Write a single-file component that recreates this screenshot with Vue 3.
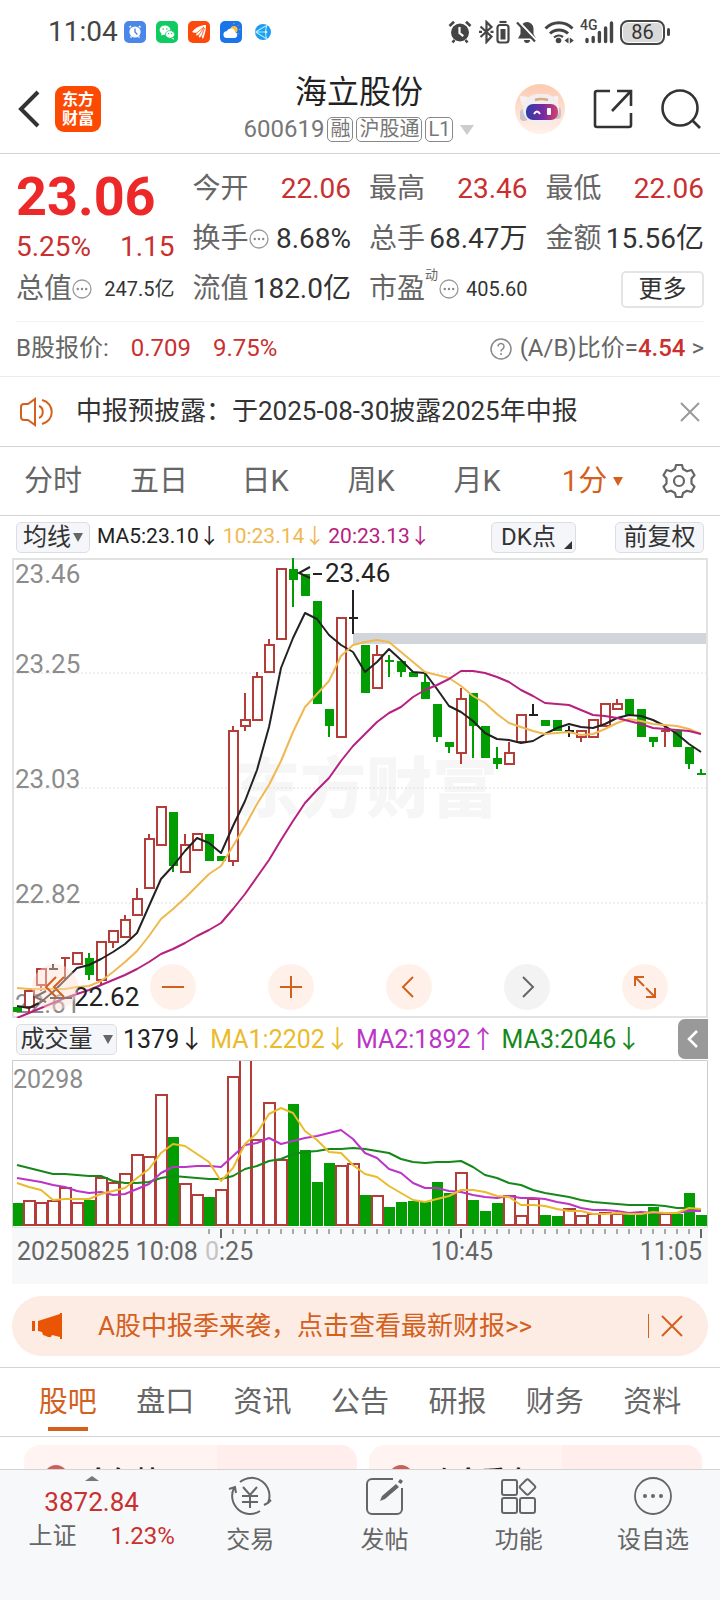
<template>
  <div class="page">
    <div class="status-bar">
      <span class="clock">11:04</span>
      <div class="app-dots">
        <svg viewBox="0 0 22 22" class="app-dot">
          <rect width="22" height="22" rx="5" fill="#4a87e8" />
          <circle cx="11" cy="11" r="5.6" fill="#fff" />
          <path d="M5.5 6.5l1.5-1.5M16.5 6.5L15 5M6.5 16.5l1-1M15.5 16.5l-1-1" stroke="#fff" stroke-width="1.6" />
          <path d="M11 7.5V11l2.4 2.4" stroke="#4a87e8" stroke-width="1.4" fill="none" />
        </svg>
        <svg viewBox="0 0 22 22" class="app-dot">
          <rect width="22" height="22" rx="5" fill="#0fcb62" />
          <ellipse cx="9" cy="9" rx="5.4" ry="4.5" fill="#fff" />
          <path d="M5 14.5l1-3 3 2z" fill="#fff" />
          <ellipse cx="14" cy="13.4" rx="4.6" ry="3.8" fill="#fff" stroke="#0fcb62" stroke-width=".7" />
          <path d="M15 17.5l2.6-.6.4 1.6z" fill="#fff" />
          <g fill="#0fcb62">
            <circle cx="7.2" cy="8" r=".8" /><circle cx="10.8" cy="8" r=".8" />
            <circle cx="12.6" cy="12.6" r=".7" /><circle cx="15.6" cy="12.6" r=".7" />
          </g>
        </svg>
        <svg viewBox="0 0 22 22" class="app-dot">
          <rect width="22" height="22" rx="5" fill="#fb4a0b" />
          <path d="M4 11C8 6 13 4 18 4c0 5-1 9-3 14-.8-1-1.4-2-1.6-3.200-.8 1-1.400 1.500-2.400 2-.3-1.200-.2-2 .1-3.200-1 .6-2 .9-3.100.9 0-1 .4-1.800 1-2.700-1.600.2-3.200 0-5-.8z" fill="#fff" />
          <path d="M8.500 12.200L16 6M11 14l5-7.500M13.500 15.500l3-8.500" stroke="#fb4a0b" stroke-width=".8" />
        </svg>
        <svg viewBox="0 0 22 22" class="app-dot">
          <rect width="22" height="22" rx="5" fill="#1a74ea" />
          <circle cx="14" cy="8.500" r="3.600" fill="#fbc04a" />
          <path d="M14 3.200v-1M18 4.700l.8-.8M19.300 8.500h1M18 12.300l.8.8" stroke="#fbc04a" />
          <path d="M7 17a3.400 3.400 0 0 1-.3-6.800 4.500 4.500 0 0 1 8.500 1A3 3 0 0 1 15 17z" fill="#fff" />
        </svg>
        <svg viewBox="0 0 22 22" class="app-dot">
          <circle cx="11" cy="11" r="8" fill="#1f9cf0" />
          <path d="M3.500 11L15 4.200M3.500 11l11.500 7M15 4.200c-2 5-2 9.500 0 13.800M3.500 11h10" stroke="#a9ecff" stroke-width="1.100" fill="none" />
          <circle cx="14" cy="11" r="1.300" fill="#c8f4ff" />
        </svg>
      </div>
      <div class="status-icons">
        <svg viewBox="0 0 24 24" width="24" height="24">
          <circle cx="12" cy="12.500" r="9" fill="#454545" />
          <path d="M1.500 6L6 1.800M22.500 6L18 1.800M4.500 22.500l2-2.500M19.500 22.500l-2-2.500" stroke="#454545" stroke-width="2.600" />
          <path d="M11.500 7v6l3.800 3.200" stroke="#fff" stroke-width="2.200" fill="none" />
        </svg>
        <svg viewBox="0 0 32 24" width="32" height="24" fill="none" stroke="#454545" stroke-width="2.200">
          <path d="M2.500 6.500l11 10-5 5.500V2l5 5-11 10M1 11.800h3M12.500 11.800h3" />
          <rect x="19.500" y="5" width="11" height="17.500" rx="2.500" />
          <path d="M21.500 2h7" />
          <path d="M22.500 9h5v10.500h-5z" fill="#454545" stroke="none" />
        </svg>
        <svg viewBox="0 0 22 24" width="22" height="24">
          <path d="M11 2a6.500 6.500 0 0 1 6.500 6.500V14l2.500 4.500H2L4.500 14V8.500A6.500 6.500 0 0 1 11 2zM8 20h6a3 3 0 0 1-6 0z" fill="#454545" />
          <path d="M3 2l18 19" stroke="#fff" stroke-width="2.500" />
          <path d="M1 2.500l18 19" stroke="#454545" stroke-width="2.200" />
        </svg>
        <svg viewBox="0 0 30 24" width="30" height="24" fill="none" stroke="#454545" stroke-width="3">
          <path d="M1.500 8.500a19 19 0 0 1 27 0M6 13.500a13 13 0 0 1 18 0" />
          <path d="M10 17.500a7 7 0 0 1 9-.5" stroke-width="2.400" />
          <circle cx="14.500" cy="20.500" r="2.800" fill="#454545" stroke="none" />
          <path d="M24.500 17.500v6l-4-3zM25.800 17.500v6l4-3z" fill="#454545" stroke="none" />
        </svg>
        <div class="signal">
          <span class="net">4G</span>
          <svg viewBox="0 0 34 24" width="34" height="24" stroke="#454545" stroke-width="3.400" stroke-linecap="round">
            <path d="M7 19.500v2M13.200 17.500v4M19.400 12.500v9M25.600 8v13.500M31.500 3v18.500" />
          </svg>
        </div>
        <div class="battery"><span>86</span></div>
        <i class="battery-tip"></i>
      </div>
    </div>

    <header class="header">
      <div class="header-side">
        <button class="icon-btn" aria-label="返回">
          <svg viewBox="0 0 24 40" width="24" height="40"><path d="M21 3L4 20l17 17" fill="none" stroke="#333" stroke-width="4" /></svg>
        </button>
        <a href="#" class="logo"><span>东方</span><span>财富</span></a>
      </div>
      <div class="title-box">
        <h1>海立股份</h1>
        <div class="code-row">
          <span>600619</span>
          <span class="badge">融</span>
          <span class="badge">沪股通</span>
          <span class="badge">L1</span>
          <i class="caret"></i>
        </div>
      </div>
      <div class="header-side right">
        <button class="icon-btn" aria-label="智能助手">
          <svg viewBox="0 0 50 50" width="50" height="50">
            <defs>
              <linearGradient id="halo" x1="0" y1="0" x2="0" y2="1">
                <stop offset="0" stop-color="#fdc9b0" /><stop offset="1" stop-color="#fff2ec" />
              </linearGradient>
              <linearGradient id="visor" x1="0" y1="0" x2="1" y2="0">
                <stop offset="0" stop-color="#2e3ca8" /><stop offset=".55" stop-color="#7a2aa0" /><stop offset="1" stop-color="#d8436a" />
              </linearGradient>
            </defs>
            <circle cx="25" cy="25" r="25" fill="url(#halo)" />
            <path d="M5 12c5 0 8 1 11 3l-8 7c-2-3-3-6-3-10zM43 12c-4 0-7 1-9 3l7 6c2-3 3-5 2-9z" fill="#f6f1f1" />
            <rect x="5" y="25" width="8" height="12" rx="4" fill="#c8c4cc" />
            <rect x="38" y="23" width="8" height="12" rx="4" fill="#c8c4cc" />
            <rect x="8" y="10" width="36" height="30" rx="15" fill="#f1eef1" />
            <path d="M20 16q6-2 13 0" stroke="#dba77c" stroke-width="2.500" fill="none" />
            <rect x="11" y="20" width="32" height="16" rx="7" fill="url(#visor)" />
            <path d="M19 30q3-5 6 0" stroke="#fff" stroke-width="2" fill="none" />
            <rect x="32" y="24" width="4" height="7" rx="1" fill="#fff" />
          </svg>
        </button>
        <button class="icon-btn" aria-label="分享">
          <svg viewBox="0 0 40 40" width="40" height="40" fill="none" stroke="#333" stroke-width="2.600">
            <path d="M17 2H4a2 2 0 0 0-2 2v32a2 2 0 0 0 2 2h32a2 2 0 0 0 2-2V24M24 2h14v15M37 3L19 22" />
          </svg>
        </button>
        <button class="icon-btn" aria-label="搜索">
          <svg viewBox="0 0 40 40" width="40" height="40" fill="none" stroke="#333" stroke-width="2.600">
            <circle cx="19" cy="19" r="17.500" /><path d="M31 31l8 8" />
          </svg>
        </button>
      </div>
    </header>

    <main class="content">
      <section class="quote">
        <div class="price-box">
          <div class="price">23.06</div>
          <div class="change"><span>5.25%</span><span>1.15</span></div>
        </div>
        <div v-for="s in stats" :key="s.label" class="stat">
          <span class="label">{{ s.label }}<sup v-if="s.sup">{{ s.sup }}</sup></span>
          <svg v-if="s.info" class="info" viewBox="0 0 20 20">
            <circle cx="10" cy="10" r="9" fill="none" stroke="#999" stroke-width="1.300" />
            <g fill="#888"><circle cx="5.800" cy="10" r="1.200" /><circle cx="10" cy="10" r="1.200" /><circle cx="14.200" cy="10" r="1.200" /></g>
          </svg>
          <span class="value" :class="{ up: s.up, small: s.small }">{{ s.value }}</span>
        </div>
        <div class="stat"><button class="more">更多</button></div>
      </section>

      <div class="b-share">
        <span class="b-label">B股报价:</span>
        <span class="up">0.709</span>
        <span class="up">9.75%</span>
        <a href="#" class="ratio">
          <svg viewBox="0 0 22 22" width="22" height="22">
            <circle cx="11" cy="11" r="10" fill="none" stroke="#888" stroke-width="1.500" />
            <path d="M8 8.500a3 3 0 1 1 4.500 2.600c-1 .6-1.500 1-1.500 2.400M11 15v2" fill="none" stroke="#888" stroke-width="1.500" />
          </svg>
          <span>(A/B)比价=<b>4.54</b> &gt;</span>
        </a>
      </div>

      <div class="notice">
        <svg viewBox="0 0 34 30" width="34" height="30" fill="none" stroke="#d4601e" stroke-width="2">
          <path d="M15 2v26l-7-5H4a3 3 0 0 1-3-3V10a3 3 0 0 1 3-3h4zM19 9c5 2 5 10 0 12M22 3c13 3 13 21 0 24" />
        </svg>
        <span class="notice-text">中报预披露：于2025-08-30披露2025年中报</span>
        <button class="icon-btn" aria-label="关闭">
          <svg viewBox="0 0 20 20" width="20" height="20"><path d="M1 1l18 18M19 1L1 19" stroke="#999" stroke-width="2" /></svg>
        </button>
      </div>

      <nav class="periods">
        <button v-for="p in periods" :key="p">{{ p }}</button>
        <button class="active">1分<i class="tri"></i></button>
        <button class="gear" aria-label="设置">
          <svg viewBox="0 0 36 36" width="36" height="36" fill="none" stroke="#666" stroke-width="2.200" stroke-linejoin="round">
            <path d="M15 2h6l1 4 4 2.300 4.500-1.300 3 5.200L30.500 15.500v5l3 3.300-3 5.200L26 27.700 22 30l-1 4h-6l-1-4-4-2.300L5.500 29l-3-5.200 3-3.300v-5l-3-3.300 3-5.200L10 8.300 14 6z" />
            <circle cx="18" cy="18" r="5" />
          </svg>
        </button>
      </nav>

      <section class="charts">
        <div class="bar">
          <button class="pill">均线<i class="tri grey"></i></button>
          <span class="ma-item c-black">MA5:23.10<em>↓</em></span>
          <span class="ma-item c-gold">10:23.14<em>↓</em></span>
          <span class="ma-item c-pink">20:23.13<em>↓</em></span>
          <button class="pill dk">DK点<i class="corner"></i></button>
          <button class="pill adjust">前复权</button>
        </div>

        <div class="price-chart">
          <svg viewBox="0 0 696 460" class="canvas">
            <text x="354" y="254" class="watermark">东方财富</text>
            <path v-for="y in [115, 230, 345]" :key="y" :d="`M1 ${y}H695`" class="grid" />
            <rect x="341" y="75" width="354" height="11" fill="#d2d6da" />
            <rect x="1" y="1" width="694" height="458" class="frame" />
            <text v-for="t in axis" :key="t.text" x="3" :y="t.y" class="axis">{{ t.text }}</text>
            <g v-for="c in candles" :key="c.x" :class="c.kind">
              <path :d="c.wick" class="wick" />
              <rect v-if="c.kind === 'rise' && c.h > 0" :x="c.x - 4" :y="c.y" width="9" :height="c.h" class="hollow" />
              <rect v-else-if="c.h > 0" :x="c.x - 4" :y="c.y" width="9" :height="c.h" class="solid" />
              <path v-else :d="`M${c.x - 4} ${c.y}h9`" class="wick" />
            </g>
            <polyline :points="priceMa(5)" class="line" stroke="#222" />
            <polyline :points="priceMa(10)" class="line" stroke="#efb850" />
            <polyline :points="priceMa(20)" class="line" stroke="#b8207f" />
            <path d="M298 9l-11 6 11 5M301 16h9" class="pointer" />
            <text x="313" y="24" class="mark">23.46</text>
            <path d="M34 433l-11 6 11 5M38 440h22" class="pointer" />
            <text x="62" y="448" class="mark">22.62</text>
          </svg>
          <div class="tools">
            <button aria-label="快退"><svg viewBox="0 0 24 24"><path d="M13 2L3 12l10 10M21 2L11 12l10 10" /></svg></button>
            <button aria-label="缩小"><svg viewBox="0 0 24 24"><path d="M1 12h22" /></svg></button>
            <button aria-label="放大"><svg viewBox="0 0 24 24"><path d="M1 12h22M12 1v22" /></svg></button>
            <button aria-label="左移"><svg viewBox="0 0 24 24"><path d="M16 2L6 12l10 10" /></svg></button>
            <button aria-label="右移" class="off"><svg viewBox="0 0 24 24"><path d="M8 2l10 10L8 22" /></svg></button>
            <button aria-label="全屏"><svg viewBox="0 0 24 24"><path d="M2 11V2h9M2.500 2.500L11 11M22 13v9h-9M21.500 21.500L13 13" /></svg></button>
          </div>
        </div>

        <div class="bar vol-bar">
          <button class="pill vol-pill">成交量<i class="tri grey"></i></button>
          <span class="vol-item c-black">1379<em>↓</em></span>
          <span class="vol-item c-yellow">MA1:2202<em>↓</em></span>
          <span class="vol-item c-purple">MA2:1892<em>↑</em></span>
          <span class="vol-item c-green">MA3:2046<em>↓</em></span>
          <button class="fold" aria-label="收起">
            <svg viewBox="0 0 12 18" width="12" height="18"><path d="M10 1L2 9l8 8" fill="none" stroke="#fff" stroke-width="2.600" /></svg>
          </button>
        </div>

        <svg viewBox="0 0 696 167" class="canvas">
          <g v-for="v in volumeBars" :key="v.x" :class="v.kind">
            <rect v-if="v.kind === 'rise'" :x="v.x - 5" :y="v.y" width="11" :height="165 - v.y" class="hollow" />
            <rect v-else :x="v.x - 5" :y="v.y" width="11" :height="166 - v.y" class="solid" />
          </g>
          <polyline :points="volumeMa(20)" class="line" stroke="#16881a" />
          <polyline :points="volumeMa(10)" class="line" stroke="#bb35c6" />
          <polyline :points="volumeMa(5)" class="line" stroke="#eabb2c" />
          <path d="M.5 167V.5H695.500V167" class="frame-thin" />
          <text x="1" y="28" class="axis-small">20298</text>
        </svg>

        <svg viewBox="0 0 696 57" class="canvas time-axis">
          <path d="M0 0H696" stroke="#c4d6c4" />
          <path v-for="t in ticks" :key="t.x" :d="`M${t.x} 2v${t.major ? 9 : 5}`" :stroke="t.major ? '#666' : '#aaa'" stroke-width="2" />
          <text x="5" y="33" class="time">20250825 10:08</text>
          <text x="193" y="33" class="time"><tspan fill="#c4c4c4">0</tspan>:25</text>
          <text x="450" y="33" class="time" text-anchor="middle">10:45</text>
          <text x="690" y="33" class="time" text-anchor="end">11:05</text>
        </svg>
      </section>

      <div class="banner">
        <svg viewBox="0 0 32 28" width="32" height="28" fill="#ea5504">
          <path d="M1 9h3v10H1zM7 9l22-7V1h2v26h-2v-2l-8-2-1 2h-3l-2-1-3-1-1-3-4-1z" />
        </svg>
        <a href="#" class="banner-text">A股中报季来袭，点击查看最新财报&gt;&gt;</a>
        <i class="split"></i>
        <button class="icon-btn" aria-label="关闭">
          <svg viewBox="0 0 22 22" width="22" height="22"><path d="M1 1l20 20M21 1L1 21" stroke="#d4601e" stroke-width="2" /></svg>
        </button>
      </div>

      <nav class="tabs">
        <button v-for="(t, i) in tabs" :key="t" :class="{ active: i === 0 }">{{ t }}</button>
      </nav>

      <div class="cards">
        <div v-for="c in cards" :key="c" class="card"><i></i><b>{{ c }}</b></div>
      </div>
    </main>

    <footer class="footer">
      <div class="index">
        <i class="up-tri"></i>
        <div class="index-value">3872.84</div>
        <div class="index-row"><span>上证</span><span class="up">1.23%</span></div>
      </div>
      <button class="foot-item">
        <svg viewBox="0 0 44 40" width="44" height="40" fill="none" stroke="#666" stroke-width="2">
          <path d="M12 6a18 18 0 0 1 28 21M32 35A18 18 0 0 1 6 12M1 13l6-2 1 6M36 29l4-2 3-3" />
          <path d="M15 11l7 8 7-8M22 19v13M14 20h16M14 26h16" />
        </svg>
        <span>交易</span>
      </button>
      <button class="foot-item">
        <svg viewBox="0 0 44 40" width="44" height="40" fill="none" stroke="#666" stroke-width="2">
          <path d="M30 3H9a5 5 0 0 0-5 5v25a5 5 0 0 0 5 5h25a5 5 0 0 0 5-5V12" />
          <path d="M17 25l2-5L33 8l3 3-14 12zM35 6l2-3 3 2-2 3z" fill="#666" stroke="none" />
        </svg>
        <span>发帖</span>
      </button>
      <button class="foot-item">
        <svg viewBox="0 0 44 40" width="44" height="40" fill="none" stroke="#666" stroke-width="2">
          <rect x="5" y="4" width="15" height="15" rx="2" />
          <rect x="5" y="22" width="15" height="15" rx="2" />
          <rect x="23" y="22" width="15" height="15" rx="2" />
          <rect x="24.500" y="5" width="12" height="12" rx="2" transform="rotate(45 30.500 11)" />
        </svg>
        <span>功能</span>
      </button>
      <button class="foot-item">
        <svg viewBox="0 0 44 40" width="44" height="40" fill="none" stroke="#666" stroke-width="1.800">
          <circle cx="22" cy="20" r="18" />
          <g fill="#666" stroke="none"><circle cx="14" cy="20" r="2" /><circle cx="22" cy="20" r="2" /><circle cx="30" cy="20" r="2" /></g>
        </svg>
        <span>设自选</span>
      </button>
    </footer>
  </div>
</template>

<script setup>
const stats = [
  { label: '今开', value: '22.06', up: true },
  { label: '最高', value: '23.46', up: true },
  { label: '最低', value: '22.06', up: true },
  { label: '换手', value: '8.68%', info: true },
  { label: '总手', value: '68.47万' },
  { label: '金额', value: '15.56亿' },
  { label: '总值', value: '247.5亿', info: true, small: true },
  { label: '流值', value: '182.0亿' },
  { label: '市盈', value: '405.60', sup: '动', info: true, small: true }
]
const periods = ['分时', '五日', '日K', '周K', '月K']
const tabs = ['股吧', '盘口', '资讯', '公告', '研报', '财务', '资料']
const cards = ['人气榜', '个人看点']
const axis = [
  { text: '23.46', y: 25 },
  { text: '23.25', y: 115 },
  { text: '23.03', y: 230 },
  { text: '22.82', y: 345 },
  { text: '22.61', y: 455 }
]

// open, close, high, low (in cents), kind only for a bar that closes flat
const bars = [
  [2263, 2262, 2263, 2262], [2263, 2266, 2266, 2262], [2267, 2270, 2270, 2266], [2270, 2270, 2271, 2270],
  [2272, 2272, 2272, 2268, 'rise'], [2271, 2273, 2273, 2271], [2272, 2269, 2273, 2268], [2268, 2275, 2275, 2267],
  [2275, 2277, 2277, 2274], [2276, 2279, 2280, 2276], [2280, 2283, 2285, 2280], [2285, 2294, 2295, 2285],
  [2293, 2300, 2300, 2293], [2299, 2289, 2299, 2288], [2288, 2293, 2295, 2288], [2292, 2295, 2295, 2292],
  [2295, 2290, 2295, 2290], [2291, 2290, 2291, 2290], [2290, 2314, 2315, 2289], [2315, 2316, 2321, 2314],
  [2316, 2324, 2325, 2316], [2325, 2330, 2331, 2325], [2331, 2344, 2344, 2331], [2344, 2342, 2346, 2337],
  [2343, 2339, 2343, 2339], [2338, 2319, 2338, 2319], [2318, 2315, 2318, 2313], [2313, 2335, 2335, 2313],
  [2335, 2335, 2340, 2332], [2330, 2321, 2330, 2321], [2322, 2328, 2330, 2322], [2327, 2327, 2328, 2324, 'fall'],
  [2327, 2325, 2327, 2324], [2325, 2324, 2325, 2324], [2323, 2320, 2325, 2320], [2319, 2313, 2319, 2312],
  [2312, 2311, 2312, 2310], [2310, 2320, 2322, 2308], [2321, 2315, 2321, 2309], [2315, 2309, 2315, 2309],
  [2309, 2308, 2311, 2307], [2308, 2310, 2312, 2308], [2312, 2317, 2317, 2312], [2317, 2317, 2319, 2317],
  [2316, 2315, 2316, 2315], [2316, 2314, 2316, 2314], [2314, 2314, 2315, 2313], [2313, 2314, 2314, 2312],
  [2313, 2316, 2316, 2313], [2315, 2319, 2319, 2315], [2318, 2319, 2320, 2318], [2320, 2317, 2320, 2317],
  [2318, 2313, 2318, 2313], [2313, 2312, 2313, 2311], [2314, 2314, 2315, 2311, 'rise'], [2314, 2311, 2314, 2311],
  [2311, 2308, 2311, 2307], [2306, 2306, 2307, 2306, 'fall']
]

// 19 values before the first visible bar, needed by the averages
const earlierCloses = [50, 51, 52, 54, 55, 56, 57, 58, 60, 62, 68, 70, 71, 71, 70, 68, 64, 61, 61].map((n) => 2200 + n)
const earlierVolumes = [
  10086, 10086, 10086, 5494, 5453, 5453, 6683, 15949, 12136, 9635,
  5617, 5002, 6437, 7667, 7872, 5494, 4879, 9184, 4059
]
const volumes = [
  2870, 3034, 2829, 3034, 4674, 2829, 3157, 5863, 5289, 6396, 8774, 8528, 16072, 10906, 5207, 3813, 3567, 4428,
  18368, 20298, 10619, 15129, 8118, 15047, 9307, 5453, 7790, 7380, 7626, 3854, 3649, 2296, 2911, 3075, 2952, 5412,
  4018, 6519, 3157, 1804, 2870, 3690, 1189, 3362, 1312, 1189, 2050, 1230, 1517, 1640, 1476, 1476, 1517, 2296, 1476,
  1517, 4018, 1379
]

const MAX_VOLUME = 20298
// bar whose volume is drawn as a buy although its candle closed lower
const BUY_BAR = 17

const xAt = (i) => 5 + i * 12
const yPrice = (p) => Math.round((2346 - p) * 5.41)
const yVolume = (v) => Math.round(166 - v / 123)

const kindOf = ([open, close, , , kind]) => {
  if (kind) return kind
  if (open === close) return 'flat'
  return close > open ? 'rise' : 'fall'
}

const candles = bars.map((b, i) => {
  const [open, close, high, low] = b
  const x = xAt(i)
  const y = yPrice(Math.max(open, close))
  const bottom = yPrice(Math.min(open, close))
  return {
    x,
    y,
    h: bottom - y,
    kind: kindOf(b),
    wick: `M${x} ${yPrice(high)}V${y}M${x} ${bottom}V${yPrice(low)}`
  }
})

const volumeBars = volumes.map((v, i) => ({
  x: xAt(i),
  y: v === MAX_VOLUME ? -2 : yVolume(v),
  kind: kindOf(bars[i]) === 'fall' && i !== BUY_BAR ? 'fall' : 'rise'
}))

const average = (before, shown, n, toY) => {
  const all = [...before, ...shown]
  return shown
    .map((_, i) => {
      const end = before.length + i + 1
      const sum = all.slice(end - n, end).reduce((a, b) => a + b, 0)
      return `${xAt(i)},${toY(sum / n)}`
    })
    .join(' ')
}

const priceMa = (n) => average(earlierCloses, bars.map((b) => b[1]), n, yPrice)
const volumeMa = (n) => average(earlierVolumes, volumes, n, yVolume)

const ticks = Array.from({ length: 42 }, (_, i) => ({ x: xAt(i + 16), major: (i + 16) % 20 === 17 }))
</script>

<style>
body {
  background: #fff;
}
</style>

<style scoped>
.page {
  display: flex;
  flex-direction: column;
  height: 100vh;
  font-family: Roboto, 'Noto Sans CJK SC', sans-serif;
  line-height: 1.4;
  color: #333;
  background: #fff;
}

.page * {
  box-sizing: border-box;
}

svg {
  display: block;
  flex: none;
}

button {
  padding: 0;
  border: 0;
  background: none;
  font: inherit;
  color: inherit;
  cursor: pointer;
}

a {
  color: inherit;
  text-decoration: none;
}

.up {
  color: #c9302f;
}

/* status bar */
.status-bar {
  display: flex;
  align-items: center;
  flex: none;
  height: 64px;
  padding: 0 50px 0 48px;
}

.clock {
  font-size: 28px;
  color: #454545;
}

.app-dots {
  display: flex;
  gap: 10px;
  margin-left: 6px;
}

.app-dot {
  width: 22px;
  height: 22px;
}

.status-icons {
  display: flex;
  align-items: center;
  gap: 6px;
  margin-left: auto;
}

.signal {
  position: relative;
}

.net {
  position: absolute;
  left: 0;
  top: -2px;
  font-size: 14px;
  line-height: 14px;
  font-weight: 500;
  color: #454545;
}

.battery {
  width: 45px;
  height: 25px;
  border: 2px solid #454545;
  border-radius: 8px;
  background: #d9d9d9;
  box-shadow: inset 0 0 0 1px #fff;
  font-size: 20px;
  line-height: 21px;
  text-align: center;
}

.battery-tip {
  width: 3px;
  height: 8px;
  margin-left: -4px;
  border-radius: 2px;
  background: #454545;
}

/* header */
.header {
  display: flex;
  align-items: center;
  flex: none;
  height: 90px;
  padding: 0 19px 0 17px;
  border-bottom: 1px solid #d4d4d4;
}

.header-side {
  display: flex;
  align-items: center;
  flex: 1;
  gap: 14px;
}

.header-side.right {
  justify-content: flex-end;
  gap: 28px;
}

.icon-btn {
  display: flex;
}

.logo {
  display: flex;
  flex-direction: column;
  align-items: center;
  justify-content: center;
  width: 46px;
  height: 46px;
  border-radius: 9px;
  background: #fd4a02;
  color: #fff;
  font-size: 16px;
  font-weight: 700;
  line-height: 19px;
}

.title-box {
  text-align: center;
}

.title-box h1 {
  margin: 0;
  font-size: 32px;
  font-weight: 400;
  line-height: 42px;
  color: #222;
}

.code-row {
  display: flex;
  align-items: center;
  gap: 3px;
  height: 34px;
  font-size: 24px;
  color: #777;
}

.badge {
  height: 25px;
  padding: 0 2px;
  border: 1px solid #888;
  border-radius: 5px;
  font-size: 20px;
  line-height: 23px;
}

.caret {
  margin-left: 4px;
  border: 7px solid transparent;
  border-top: 10px solid #ccc;
  border-bottom: 0;
}

/* quote */
.content {
  flex: 1;
  min-height: 0;
  overflow: hidden;
}

.quote {
  display: grid;
  grid-template-columns: repeat(4, 1fr);
  grid-auto-rows: 50px;
  column-gap: 18px;
  margin: 0 16px;
  padding: 10px 0 7px;
}

.price-box {
  grid-row: span 2;
}

.price {
  font-size: 54px;
  font-weight: 700;
  line-height: 66px;
  color: #ed2828;
}

.change {
  display: flex;
  justify-content: space-between;
  font-size: 28px;
  line-height: 34px;
  color: #c9302f;
}

.stat {
  display: flex;
  align-items: center;
  justify-content: space-between;
  font-size: 28px;
  line-height: 40px;
  white-space: nowrap;
}

.label {
  position: relative;
  color: #666;
}

.label sup {
  position: absolute;
  left: 100%;
  top: -2px;
  font-size: 13px;
  line-height: 16px;
}

.info {
  width: 20px;
  height: 20px;
  margin-right: auto;
}

.label:has(sup) + .info {
  margin-left: 14px;
}

.value.small {
  font-size: 20px;
}

.more {
  width: 83px;
  height: 37px;
  margin-left: auto;
  border: 2px solid #e4e4e4;
  border-radius: 5px;
  font-size: 24px;
  line-height: 30px;
}

.b-share {
  display: flex;
  align-items: center;
  gap: 22px;
  height: 56px;
  padding: 0 16px;
  border-bottom: 1px solid #ececec;
  font-size: 24px;
  background: linear-gradient(#f2f2f2, #f2f2f2) center top / calc(100% - 32px) 1px no-repeat;
}

.b-label,
.ratio {
  color: #666;
}

.ratio {
  display: flex;
  align-items: center;
  gap: 8px;
  margin-left: auto;
}

.ratio b {
  font-weight: 500;
  color: #c9302f;
}

.notice {
  display: flex;
  align-items: center;
  height: 70px;
  padding: 0 20px;
  border-bottom: 1px solid #d4d4d4;
}

.notice-text {
  flex: 1;
  margin-left: 22px;
  font-size: 26px;
}

.periods {
  display: grid;
  grid-template-columns: repeat(5, 106fr) 125fr 65fr;
  align-items: center;
  height: 69px;
  border-bottom: 1px solid #d4d4d4;
  font-size: 29px;
  color: #666;
}

.periods .active {
  display: flex;
  align-items: center;
  justify-content: center;
  gap: 6px;
  color: #d4601e;
}

.gear {
  display: flex;
  padding-left: 6px;
}

.tri {
  border: 5px solid transparent;
  border-top: 9px solid currentColor;
  border-bottom: 0;
}

.tri.grey {
  color: #666;
}

/* charts */
.charts {
  margin: 0 12px;
}

.bar {
  display: flex;
  align-items: center;
  height: 42px;
  padding: 0 4px;
  white-space: nowrap;
}

.pill {
  position: relative;
  display: flex;
  align-items: center;
  justify-content: center;
  gap: 2px;
  height: 31px;
  padding: 0 6px;
  border: 1px solid #dcdee4;
  border-radius: 5px;
  background: #f5f6f9;
  font-size: 24px;
  line-height: 28px;
}

.ma-item {
  margin-left: 7px;
  font-size: 21px;
}

.ma-item + .ma-item {
  margin-left: 3px;
}

.bar em {
  font-family: 'Noto Sans CJK SC', sans-serif;
  font-style: normal;
  line-height: 1;
}

.dk {
  width: 85px;
  margin-left: auto;
  margin-right: 39px;
  padding-right: 16px;
}

.adjust {
  width: 89px;
}

.corner {
  position: absolute;
  right: 3px;
  bottom: 3px;
  border-left: 8px solid transparent;
  border-bottom: 8px solid #333;
}

.c-black { color: #222; }
.c-gold { color: #efb850; }
.c-pink { color: #b8207f; }
.c-yellow { color: #eabb2c; }
.c-purple { color: #bb35c6; }
.c-green { color: #16881a; }

.price-chart {
  position: relative;
}

.canvas {
  width: 100%;
  height: auto;
}

.watermark {
  font-size: 66px;
  font-weight: 900;
  text-anchor: middle;
  fill: #f6f6f6;
}

.grid {
  stroke: #ddd;
  stroke-width: 1;
  stroke-dasharray: 2 2;
}

.frame {
  fill: none;
  stroke: #e2e2e2;
  stroke-width: 2;
}

.frame-thin {
  fill: none;
  stroke: #ccc;
}

.axis {
  font-size: 26px;
  fill: #8c8c8c;
}

.axis-small {
  font-size: 25px;
  fill: #8c8c8c;
}

.mark {
  font-size: 26px;
  fill: #222;
}

.pointer {
  fill: none;
  stroke: #222;
  stroke-width: 2;
}

.line {
  fill: none;
  stroke-width: 2;
  stroke-linejoin: round;
}

.wick {
  stroke-width: 2;
}

.rise {
  stroke: #b43c39;
}

.fall {
  stroke: #029d02;
}

.flat {
  stroke: #222;
}

.hollow {
  fill: #fff;
  stroke-width: 2;
}

.solid {
  fill: #029d02;
  stroke: none;
}

.tools {
  position: absolute;
  left: 20px;
  right: 40px;
  bottom: 8px;
  display: flex;
  justify-content: space-between;
}

.tools button {
  display: flex;
  align-items: center;
  justify-content: center;
  width: 46px;
  height: 46px;
  border-radius: 50%;
  background: rgba(255, 225, 208, 0.45);
}

.tools svg {
  width: 24px;
  height: 24px;
  fill: none;
  stroke: #d4601e;
  stroke-width: 2;
}

.tools .off {
  background: #f3f3f3;
}

.tools .off svg {
  stroke: #666;
}

.vol-bar {
  padding-right: 0;
}

.vol-pill {
  width: 101px;
  gap: 10px;
}

.vol-item {
  margin-left: 6px;
  font-size: 25px;
}

.fold {
  display: flex;
  align-items: center;
  justify-content: center;
  width: 30px;
  height: 40px;
  margin-left: auto;
  border-radius: 7px 0 0 7px;
  background: #999;
}

.time-axis {
  background: #f7f8fa;
}

.time {
  font-size: 25px;
  fill: #666;
}

/* banner and tabs */
.banner {
  display: flex;
  align-items: center;
  height: 60px;
  margin: 12px 12px 11px;
  padding: 0 25px 0 19px;
  border-radius: 30px;
  background: #fcece3;
  color: #d4601e;
}

.banner-text {
  flex: 1;
  margin-left: 35px;
  font-size: 26px;
}

.split {
  width: 1px;
  height: 24px;
  margin-right: 12px;
  background: #d4601e;
}

.tabs {
  display: flex;
  height: 70px;
  padding: 0 19px;
  border-top: 1px solid #d4d4d4;
  border-bottom: 1px solid #d4d4d4;
  font-size: 29px;
  color: #666;
}

.tabs button {
  flex: 1;
}

.tabs .active {
  color: #d4601e;
  background: linear-gradient(#d4601e, #d4601e) center bottom 5px / 40px 4px no-repeat;
}

.cards {
  display: flex;
  gap: 12px;
  padding: 8px 18px 8px 24px;
}

.card {
  display: flex;
  align-items: flex-start;
  flex: 1;
  gap: 18px;
  height: 120px;
  padding: 20px;
  border-radius: 16px;
  background: linear-gradient(90deg, #fff4f2 58%, #ffeeec 58%);
}

.card i {
  width: 24px;
  height: 24px;
  border-radius: 50%;
  background: #c9605c;
}

.card b {
  font-size: 25px;
  line-height: 32px;
  color: #222;
}

/* footer */
.footer {
  display: flex;
  flex: none;
  height: 131px;
  border-top: 1px solid #d4d4d4;
  background: #f7f8fa;
  font-size: 24px;
  color: #666;
}

.index {
  flex: 183;
  display: flex;
  flex-direction: column;
  align-items: center;
}

.up-tri {
  margin-top: 6px;
  border: 7px solid transparent;
  border-bottom: 5px solid #777;
  border-top: 0;
}

.index-value {
  margin-top: 4px;
  font-size: 26px;
  line-height: 34px;
  color: #c9302f;
}

.index-row {
  display: flex;
  gap: 34px;
  padding-left: 20px;
  line-height: 34px;
}

.foot-item {
  flex: 134;
  display: flex;
  flex-direction: column;
  align-items: center;
  padding-top: 6px;
}

.foot-item span {
  margin-top: 6px;
  line-height: 36px;
}
</style>
